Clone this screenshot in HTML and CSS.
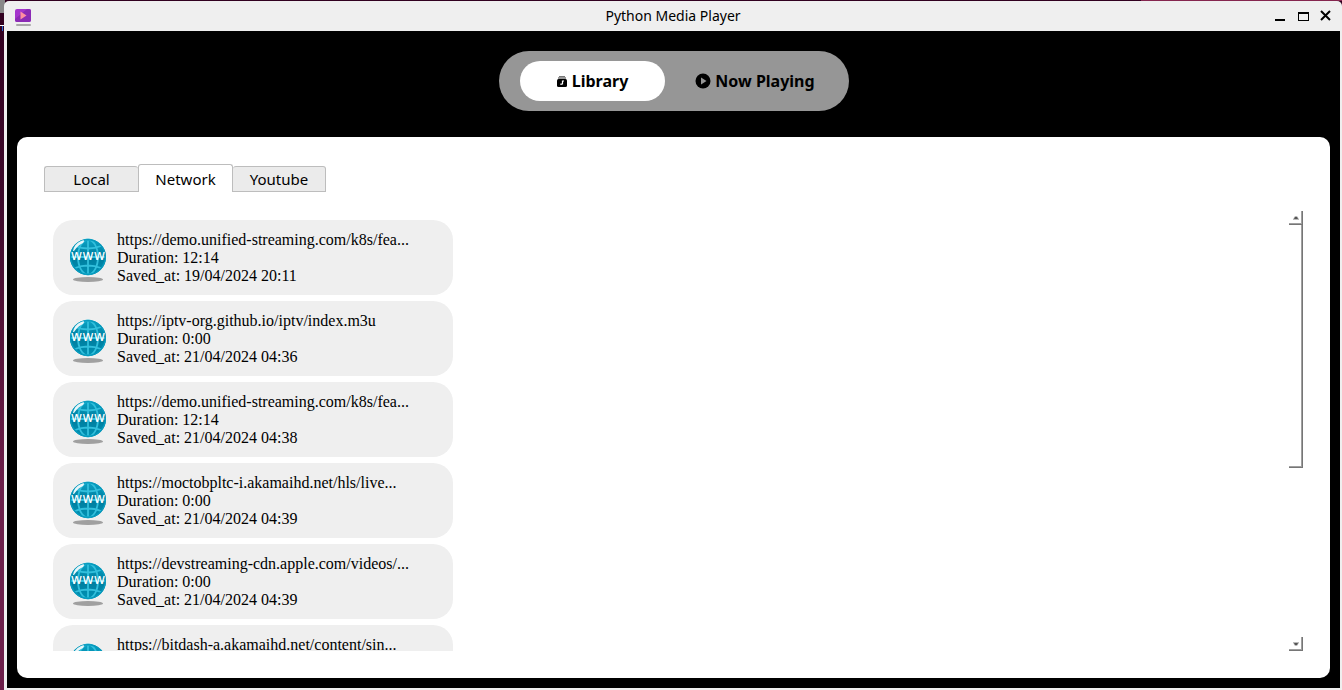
FILE: index.html
```html
<!DOCTYPE html>
<html lang="en">
<head>
<meta charset="utf-8">
<title>Python Media Player</title>
<link rel="stylesheet" href="styles.css">
</head>
<body>
<svg width="0" height="0" class="defs" aria-hidden="true">
  <defs>
    <linearGradient id="sea" x1="0" y1="0" x2="0" y2="1">
      <stop offset="0" stop-color="#0aa3c6"/>
      <stop offset="0.5" stop-color="#007c9d"/>
      <stop offset="1" stop-color="#0093b5"/>
    </linearGradient>
    <symbol id="globe" viewBox="0 0 38 46">
      <ellipse cx="19" cy="43.500" rx="15" ry="2.400" fill="#a0a0a0"/>
      <circle cx="19" cy="21" r="18" fill="url(#sea)"/>
      <g fill="none" stroke="#32bfdc" stroke-width="1.800">
        <path d="M19 3v36M1 21h36M6 10q13 5 26 0M6 32q13-5 26 0"/>
        <ellipse cx="19" cy="21" rx="10" ry="17.500"/>
      </g>
      <circle cx="19" cy="21" r="17.300" fill="none" stroke="#079abd" stroke-width="1.400"/>
      <path d="M4 15Q5 8 12 5Q17 3 14 7Q9 9 5 15z" fill="#fff" opacity=".9"/>
      <text x="19" y="24" text-anchor="middle" class="globe-text">www</text>
    </symbol>
  </defs>
</svg>
<div class="window">
  <header class="titlebar">
    <svg class="app-icon" viewBox="0 0 18 18" aria-hidden="true">
      <rect x="1" y="0" width="16" height="13" rx="2" fill="#a435cc"/>
      <path d="M1 10L13 0h2q2 0 2 2v9q0 2-2 2H3q-2 0-2-2z" fill="#8b2bb5"/>
      <path d="M6.500 2.500l6 4-6 4z" fill="#ff8fa0"/>
      <rect x="2" y="15" width="15" height="2" rx="1" fill="#a8a8a8"/>
    </svg>
    <h1 class="title">Python Media Player</h1>
    <div class="window-buttons">
      <button aria-label="Minimize"><svg viewBox="0 0 12 12"><path d="M1 9h10v2H1z"/></svg></button>
      <button aria-label="Maximize"><svg viewBox="0 0 12 12"><path fill-rule="evenodd" d="M1 2h11v9H1zM2 4v6h9V4z"/></svg></button>
      <button aria-label="Close"><svg viewBox="0 0 12 12"><path d="M1 1l9 9M10 1l-9 9" stroke="#000" stroke-width="2"/></svg></button>
    </div>
  </header>
  <main class="app">
    <nav class="switcher" aria-label="Views">
      <button class="view active">
        <svg class="library-icon" viewBox="0 0 12 13" aria-hidden="true"><path d="M3 1h6v1H3z" fill="#777"/><path d="M2 2.500h8v1H2z" fill="#333"/><rect x="1" y="4" width="10" height="8" rx="1.500"/><path d="M5 10V9h1.500V6H8" stroke="#fff" stroke-width="1.200" fill="none"/></svg>
        Library
      </button>
      <button class="view">
        <svg class="play-icon" viewBox="0 0 16 16" aria-hidden="true"><circle cx="8" cy="8" r="7.500"/><path d="M6 4.500L11.500 8 6 11.500z" fill="#969696"/></svg>
        Now Playing
      </button>
    </nav>
    <section class="panel">
      <div class="tabs" role="tablist">
        <button class="tab" role="tab">Local</button>
        <button class="tab selected" role="tab" aria-selected="true">Network</button>
        <button class="tab" role="tab">Youtube</button>
      </div>
      <div class="browser">
        <ul class="streams">
          <li class="stream"><svg class="globe"><use href="#globe"/></svg><p>https://demo.unified-streaming.com/k8s/fea...<br>Duration: 12:14<br>Saved_at: 19/04/2024 20:11</p></li>
          <li class="stream"><svg class="globe"><use href="#globe"/></svg><p>https://iptv-org.github.io/iptv/index.m3u<br>Duration: 0:00<br>Saved_at: 21/04/2024 04:36</p></li>
          <li class="stream"><svg class="globe"><use href="#globe"/></svg><p>https://demo.unified-streaming.com/k8s/fea...<br>Duration: 12:14<br>Saved_at: 21/04/2024 04:38</p></li>
          <li class="stream"><svg class="globe"><use href="#globe"/></svg><p>https://moctobpltc-i.akamaihd.net/hls/live...<br>Duration: 0:00<br>Saved_at: 21/04/2024 04:39</p></li>
          <li class="stream"><svg class="globe"><use href="#globe"/></svg><p>https://devstreaming-cdn.apple.com/videos/...<br>Duration: 0:00<br>Saved_at: 21/04/2024 04:39</p></li>
          <li class="stream"><svg class="globe"><use href="#globe"/></svg><p>https://bitdash-a.akamaihd.net/content/sin...</p></li>
        </ul>
        <div class="scrollbar">
          <button class="step" aria-label="Scroll up"><svg viewBox="0 0 6 4"><path d="M2 0h2l2 3v1H0V3z" fill="#bbb"/><path d="M2 1h2l1 2H1z" fill="#555"/></svg></button>
          <div class="track"><div class="thumb"></div></div>
          <button class="step" aria-label="Scroll down"><svg viewBox="0 0 6 4"><path d="M0 0h6v1L4 4H2L0 1z" fill="#bbb"/><path d="M1 1h4L4 3H2z" fill="#555"/></svg></button>
        </div>
      </div>
    </section>
  </main>
</div>
</body>
</html>
```
FILE: styles.css
```css
* { box-sizing: border-box; }
body {
  margin: 0;
  height: 100vh;
  padding: 1px 0 0 4px;
  overflow: hidden;
  background:
    linear-gradient(#888, #888) 0 0 / 5px 13px no-repeat,
    linear-gradient(#fff, #fff) 0 25px / 4px 1px no-repeat,
    linear-gradient(#2a6fd6, #2a6fd6) 2px 26px / 1px 5px no-repeat,
    linear-gradient(90deg, transparent 85%, #85264f 85%) 0 0 / 100% 1px no-repeat,
    linear-gradient(#31001f 0, #3d0a2b 30%, #551238 50%, #6b1e49 70%);
  font-family: "Noto Sans", sans-serif;
  color: #000;
}
button {
  border: 0;
  padding: 0;
  background: none;
  font: inherit;
  color: inherit;
}
.defs { position: absolute; }
.window {
  display: flex;
  flex-direction: column;
  height: 100%;
  padding: 0 2px 2px 3px;
  border-radius: 5px 5px 0 0;
  background: #efefef;
}
.titlebar {
  display: grid;
  grid-template-columns: 1fr auto 1fr;
  align-items: center;
  height: 30px;
  padding: 0 8px 0 7px;
}
.app-icon { width: 18px; height: 18px; margin-top: 4px; }
.title { margin: 0; font-size: 14px; font-weight: 400; line-height: 20px; }
.window-buttons { display: flex; justify-content: flex-end; gap: 11px; }
.window-buttons button { width: 12px; height: 12px; }
.window-buttons svg { display: block; width: 12px; height: 12px; }
.app {
  flex: 1;
  min-height: 0;
  display: flex;
  flex-direction: column;
  align-items: center;
  gap: 26px;
  padding: 20px 10px 10px;
  background: #000;
}
.switcher {
  display: flex;
  gap: 18px;
  padding: 10px 21px;
  border-radius: 30px;
  background: #969696;
}
.view {
  display: flex;
  align-items: center;
  justify-content: center;
  gap: 4px;
  width: 145px;
  height: 40px;
  border-radius: 20px;
  font-size: 16px;
  font-weight: 700;
  white-space: nowrap;
}
.active { background: #fff; }
.library-icon { width: 12px; height: 13px; }
.play-icon { width: 16px; height: 16px; }
.panel {
  flex: 1;
  min-height: 0;
  align-self: stretch;
  display: flex;
  flex-direction: column;
  gap: 19px;
  padding: 27px;
  border-radius: 10px;
  background: #fff;
}
.tabs { display: flex; align-items: flex-end; height: 28px; }
.tab {
  width: 94px;
  height: 26px;
  border: 1px solid #bdbdbd;
  border-radius: 3px 3px 0 0;
  background: #ebebeb;
  font-size: 15px;
  line-height: 24px;
}
.selected { height: 28px; width: 95px; border-bottom: 0; background: #fff; }
.tab + .tab:not(.selected) { border-left: 0; }
.tab:first-child { border-right: 0; }
.tab:last-child { width: 93px; }
.browser { flex: 1; min-height: 0; display: flex; justify-content: space-between; }
.streams {
  display: flex;
  flex-direction: column;
  gap: 6px;
  width: 409px;
  margin: 0;
  padding: 9px 0 0 9px;
  overflow: hidden;
  list-style: none;
}
.stream {
  flex: none;
  display: flex;
  gap: 10px;
  height: 75px;
  padding: 11px 16px;
  border-radius: 20px;
  background: #efefef;
  font-family: "Liberation Serif", serif;
  font-size: 16px;
  line-height: 18px;
}
.stream p { margin: 0; }
.globe { flex: none; width: 38px; height: 46px; margin-top: 5px; }
.globe-text {
  font-family: "DejaVu Sans", sans-serif;
  font-size: 14px;
  font-weight: 400;
  fill: #fff;
}
.scrollbar { display: flex; flex-direction: column; width: 14px; }
.step, .thumb {
  border: solid #767676;
  border-width: 0 1px 1px 0;
  box-shadow: inset -1px -1px #a0a0a0;
}
.step { display: flex; align-items: center; justify-content: center; height: 14px; }
.step svg { width: 6px; height: 4px; }
.track { flex: 1; min-height: 0; }
.thumb { height: 59%; }
```
